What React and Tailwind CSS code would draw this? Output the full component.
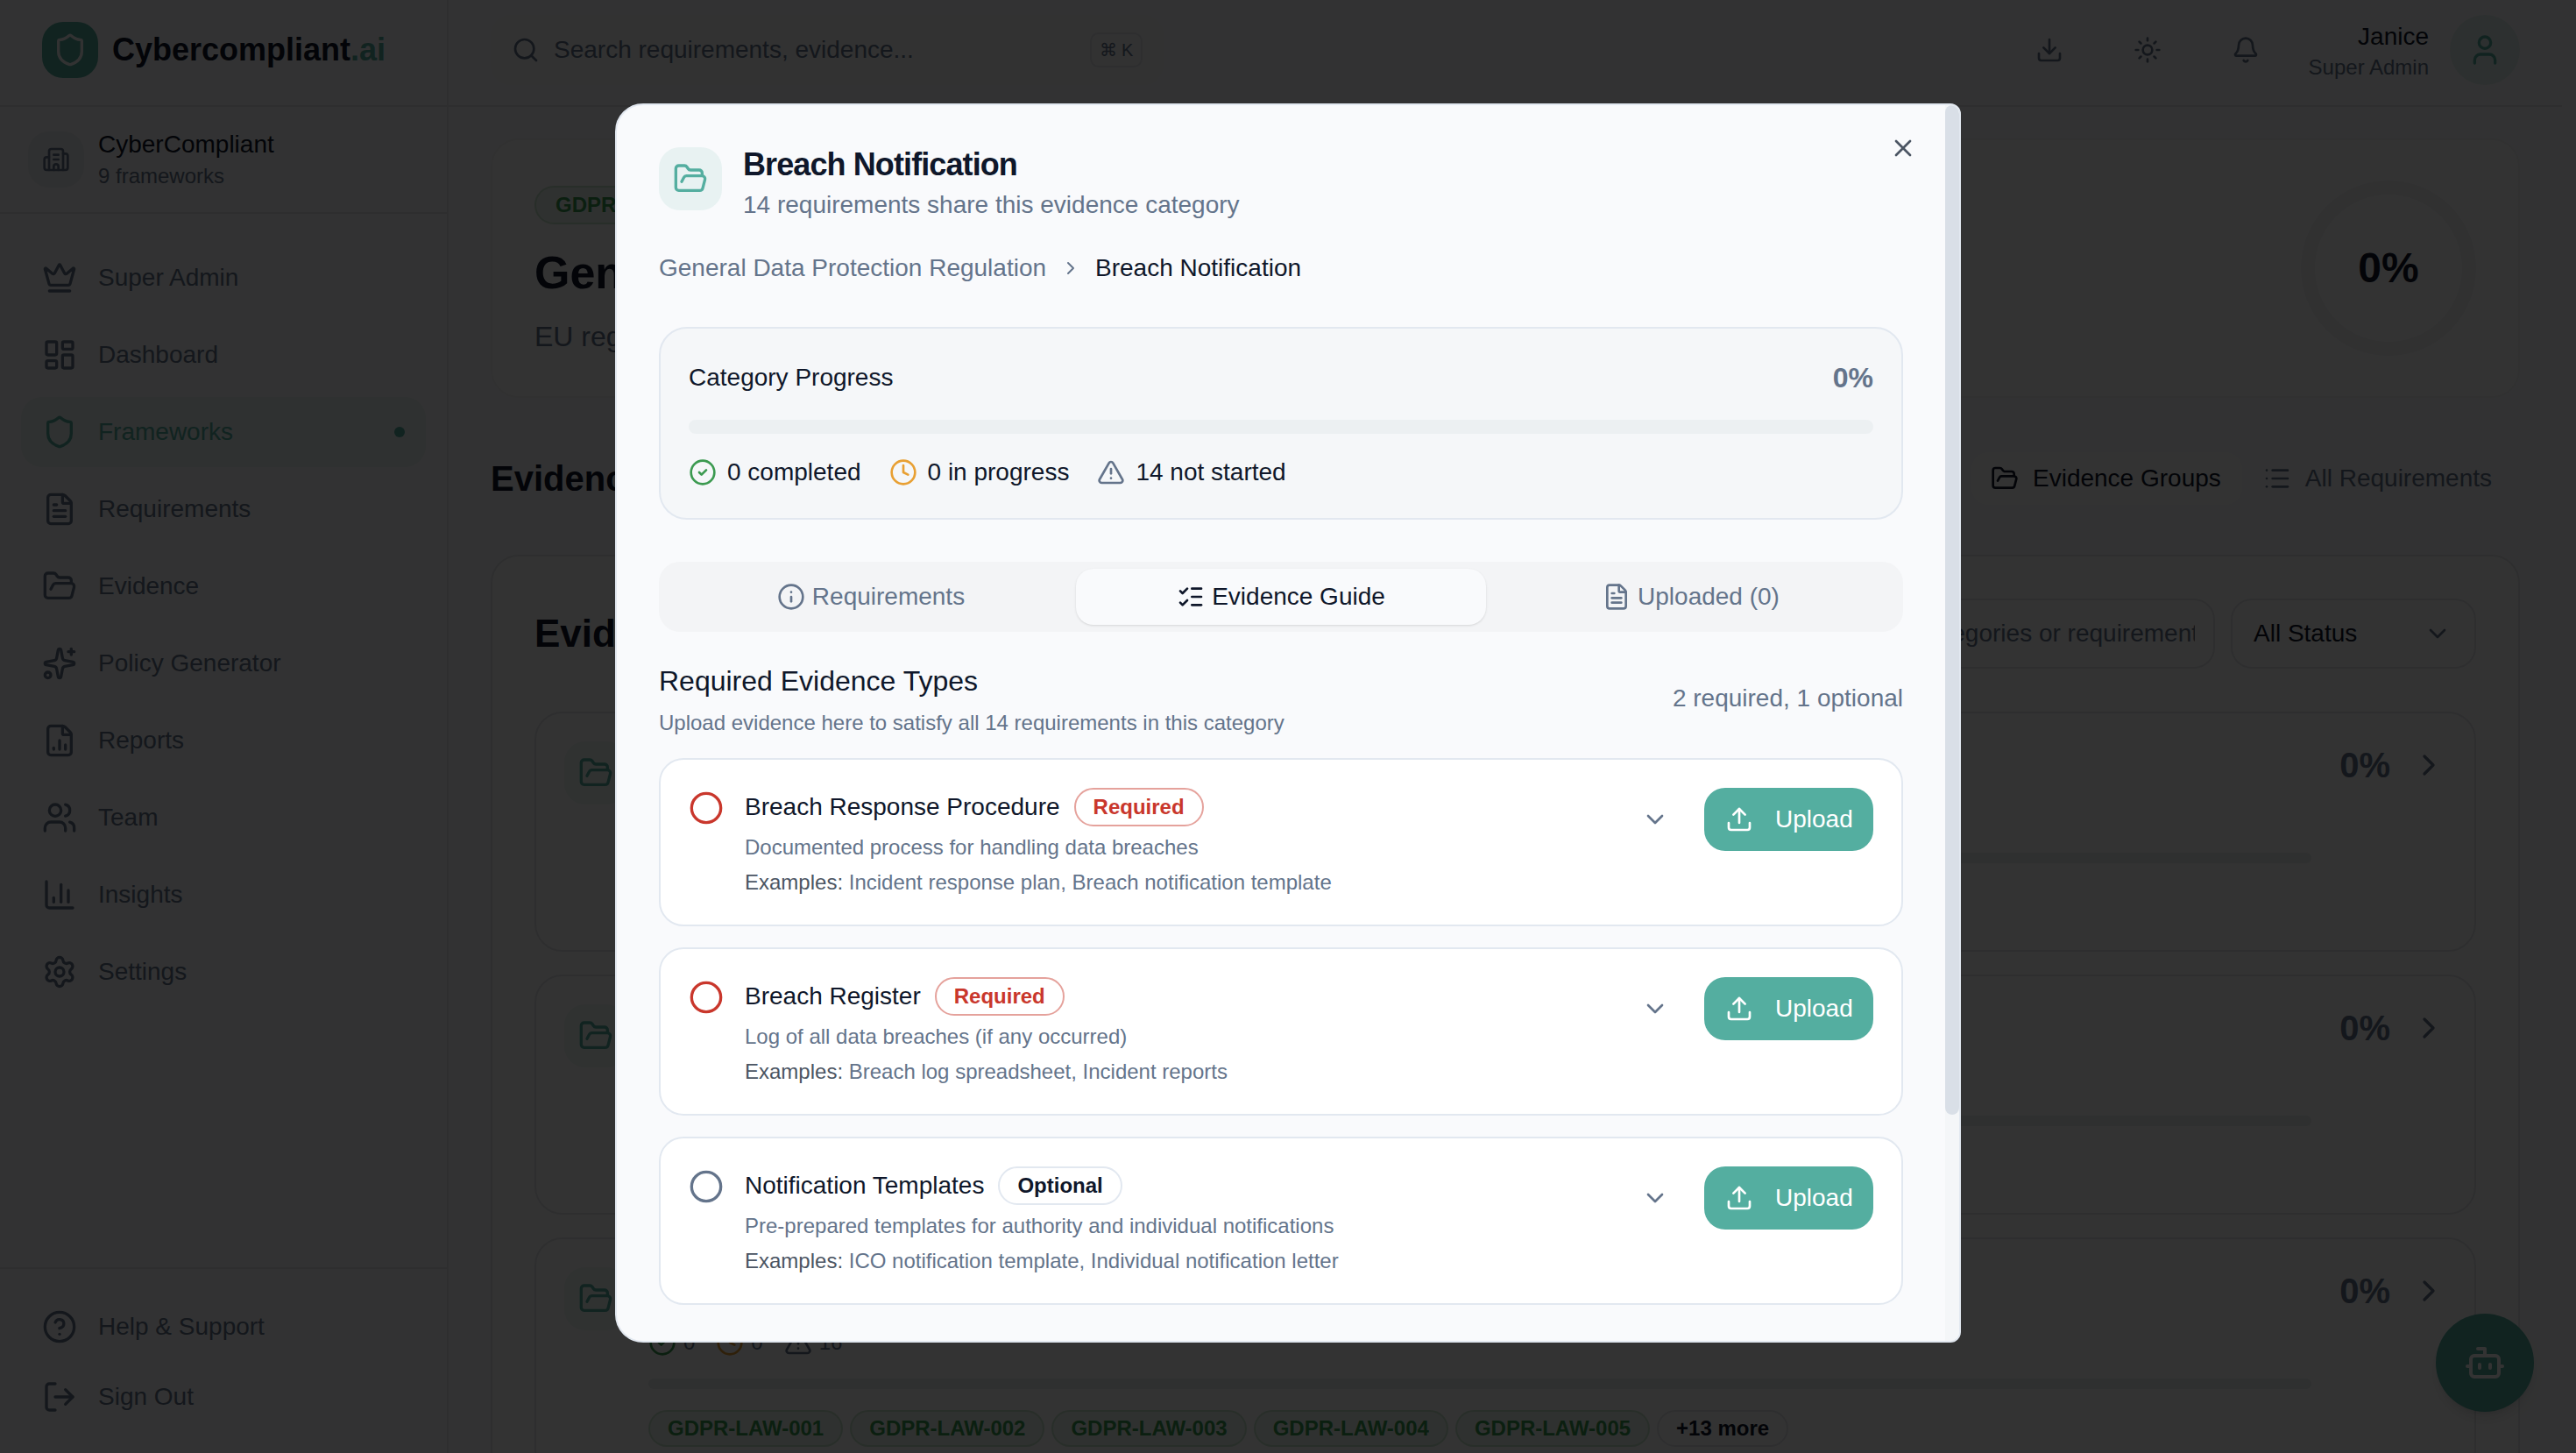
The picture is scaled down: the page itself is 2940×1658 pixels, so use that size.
import React from "react";
import {
  Shield, Building2, Crown, LayoutDashboard, FileText, FolderOpen, Sparkles, FileChartColumn, Users, ChartColumn, Settings,
  CircleHelp, LogOut, Search, Download, Sun, Bell, User, List, ChevronDown, ChevronRight, Bot, X, CircleCheck, Clock,
  TriangleAlert, Info, ListChecks, Upload, Circle,
} from "lucide-react";

const nav = [
  [Crown, "Super Admin"],
  [LayoutDashboard, "Dashboard"],
  [Shield, "Frameworks", true],
  [FileText, "Requirements"],
  [FolderOpen, "Evidence"],
  [Sparkles, "Policy Generator"],
  [FileChartColumn, "Reports"],
  [Users, "Team"],
  [ChartColumn, "Insights"],
  [Settings, "Settings"],
];

const tags = ["GDPR-LAW-001", "GDPR-LAW-002", "GDPR-LAW-003", "GDPR-LAW-004", "GDPR-LAW-005"];

function Sidebar() {
  return (
    <aside className="w-[512px] h-full shrink-0 flex flex-col border-r-2 border-[#e5e7eb] bg-[#fafbfc]">
      <div className="h-[122px] shrink-0 border-b-2 border-[#e5e7eb] flex items-center gap-4 pl-[48px] pb-[6px]">
        <div className="w-16 h-16 rounded-[24px] bg-[#54aea0] flex items-center justify-center text-[#f9fafb]">
          <Shield size={40} />
        </div>
        <div className="text-[36px] leading-[48px] font-bold text-[#0f172a]">
          Cybercompliant<span className="text-[#54aea0]">.ai</span>
        </div>
      </div>
      <div className="h-[122px] shrink-0 border-b-2 border-[#e5e7eb] flex items-center gap-4 pl-[32px]">
        <div className="w-16 h-16 rounded-[24px] bg-[#eceef2] flex items-center justify-center text-[#64748b]">
          <Building2 size={32} />
        </div>
        <div>
          <div className="text-[28px] leading-[36px] text-[#0f172a]">CyberCompliant</div>
          <div className="mt-[2px] text-[24px] leading-[32px] text-[#64748b]">9 frameworks</div>
        </div>
      </div>
      <nav className="flex-1 pt-[33px] px-6 flex flex-col gap-2">
        {nav.map(([I, label, active]) => (
          <div
            key={label}
            className={
              active
                ? "h-20 rounded-[24px] bg-[#54aea0]/10 text-[#54aea0] flex items-center gap-6 pl-6 pr-6"
                : "h-20 rounded-[24px] text-[#64748b] flex items-center gap-6 pl-6 pr-6"
            }
          >
            <I size={40} />
            <span className="text-[28px] flex-1">{label}</span>
            {active && <span className="w-3 h-3 rounded-full bg-[#54aea0]" />}
          </div>
        ))}
      </nav>
      <div className="border-t-2 border-[#e5e7eb] px-6 pt-[26px] pb-6">
        {[[CircleHelp, "Help & Support"], [LogOut, "Sign Out"]].map(([I, label]) => (
          <div key={label} className="h-20 flex items-center gap-6 pl-6 text-[#64748b]">
            <I size={40} />
            <span className="text-[28px]">{label}</span>
          </div>
        ))}
      </div>
    </aside>
  );
}

function Topbar() {
  return (
    <header className="h-[122px] shrink-0 border-b-2 border-[#e5e7eb] flex items-center px-12 pb-[6px]">
      <div className="w-[768px] h-20 rounded-[24px] bg-[#f3f4f6]/40 flex items-center pl-6 pr-6 gap-4 text-[#64748b]">
        <Search size={32} />
        <span className="text-[28px] flex-1">Search requirements, evidence...</span>
        <span className="w-[60px] h-10 rounded-[10px] border-2 border-[#e5e7eb] flex items-center justify-center text-[20px]">⌘ K</span>
      </div>
      <div className="flex-1" />
      <div className="flex items-center gap-8 text-[#64748b]">
        {[Download, Sun, Bell].map((I, i) => (
          <div key={i} className="w-20 h-20 flex items-center justify-center"><I size={32} /></div>
        ))}
      </div>
      <div className="ml-[32px] pt-[2px] text-right">
        <div className="text-[28px] leading-[36px] text-[#0f172a]">Janice</div>
        <div className="mt-[1px] text-[24px] leading-[32px] text-[#64748b]">Super Admin</div>
      </div>
      <div className="ml-6 w-20 h-20 rounded-full bg-[#54aea0]/15 flex items-center justify-center text-[#54aea0]">
        <User size={40} />
      </div>
    </header>
  );
}

function GroupCard({ title }) {
  return (
    <div className="h-[274px] shrink-0 rounded-[32px] border-2 border-[#e5e7eb] bg-white p-8 flex">
      <div className="w-[72px] h-[72px] rounded-[24px] bg-[#54aea0]/10 flex items-center justify-center text-[#54aea0] shrink-0">
        <FolderOpen size={40} />
      </div>
      <div className="ml-6 w-[1898px] shrink-0">
        <div className="h-12 text-[36px] leading-[48px] font-bold text-[#0f172a]">{title}</div>
        <div className="mt-[22px] h-8 flex items-center gap-6 text-[24px] text-[#64748b]">
          <span className="flex items-center gap-2"><CircleCheck size={32} className="text-[#3b9a50]" />0</span>
          <span className="flex items-center gap-2"><Clock size={32} className="text-[#e8a033]" />0</span>
          <span className="flex items-center gap-2"><TriangleAlert size={32} />16</span>
        </div>
        <div className="mt-[25px] h-3 rounded-full bg-[#e9edf0]" />
        <div className="mt-6 flex gap-2">
          {tags.map((t) => (
            <span key={t} className="h-[42px] px-[20px] rounded-full border-2 border-[#3b9a50]/20 bg-[#3b9a50]/10 text-[#3b9a50] text-[24px] leading-[38px] font-bold whitespace-nowrap">{t}</span>
          ))}
          <span className="h-[42px] px-[20px] rounded-full border-2 border-[#e5e7eb] text-[#0f172a] text-[24px] leading-[38px] font-bold whitespace-nowrap">+13 more</span>
        </div>
      </div>
      <div className="ml-auto flex items-start gap-6 pt-[3px] text-[#64748b]">
        <span className="text-[40px] leading-[48px] font-bold">0%</span>
        <ChevronRight size={40} className="mt-1" />
      </div>
    </div>
  );
}

function Main() {
  return (
    <main className="w-[2412px] shrink-0 h-full flex flex-col overflow-hidden">
      <Topbar />
      <div className="px-12 pt-[36px] flex flex-col">
        <section className="h-[296px] rounded-[32px] bg-white border-2 border-[#f3f4f6] pl-12 pr-12 flex items-center justify-between">
          <div className="mt-[5px]">
            <span className="inline-block h-[44px] px-[22px] rounded-full border-2 border-[#3b9a50]/20 bg-[#3b9a50]/10 text-[#3b9a50] text-[24px] leading-[40px] font-bold">GDPR</span>
            <h1 className="mt-[23px] text-[52px] leading-[64px] font-bold text-[#0f172a]">General Data Protection Regulation</h1>
            <p className="mt-[19px] text-[32px] leading-[44px] text-[#64748b]">EU regulation on data protection and privacy</p>
          </div>
          <div className="relative w-[200px] h-[200px] flex items-center justify-center">
            <svg viewBox="0 0 200 200" className="absolute inset-0 w-[200px] h-[200px]">
              <circle cx="100" cy="100" r="92" fill="none" stroke="#f3f4f6" strokeWidth="16" />
            </svg>
            <span className="relative text-[48px] font-bold text-[#0f172a]">0%</span>
          </div>
        </section>
        <div className="mt-[62px] h-[60px] flex items-center justify-between">
          <h2 className="text-[40px] font-bold text-[#0f172a]">Evidence Management</h2>
          <div className="h-[60px] flex items-center gap-[24px] pr-[32px] text-[28px]">
            <span className="h-[60px] pl-[22px] pr-[24px] rounded-[20px] bg-white flex items-center gap-[16px] text-[#0f172a]">
              <FolderOpen size={32} />Evidence Groups
            </span>
            <span className="flex items-center gap-[16px] text-[#64748b]"><List size={32} />All Requirements</span>
          </div>
        </div>
        <section className="mt-[57px] rounded-[32px] border-2 border-[#e5e7eb] bg-white p-12 pb-0 h-[1200px]">
          <div className="h-20 flex items-center">
            <h2 className="flex-1 text-[44px] font-bold text-[#0f172a]">Evidence Categories</h2>
            <div className="w-[640px] h-20 rounded-[24px] border-2 border-[#e5e7eb] flex items-center pl-[40px] pr-[21px] text-[28px] text-[#64748b]">
              <div className="flex-1 overflow-hidden whitespace-nowrap flex justify-end">
                <span className="shrink-0 -mr-1">Search categories or requirement</span>
              </div>
            </div>
            <div className="ml-[18px] w-[280px] h-20 rounded-[24px] border-2 border-[#e5e7eb] flex items-center justify-between pl-[24px] pr-[26px] text-[28px] text-[#0f172a]">
              All Status <ChevronDown size={32} className="text-[#64748b]" />
            </div>
          </div>
          <div className="mt-[49px] flex flex-col gap-[26px]">
            <GroupCard title="Lawful Basis" />
            <GroupCard title="Data Subject Rights" />
            <GroupCard title="Breach Notification" />
          </div>
        </section>
      </div>
    </main>
  );
}

function EvidenceCard({ name, badge, required, desc, examples }) {
  return (
    <div className="h-[192px] rounded-[28px] border-2 border-[#e2e8f0] bg-white p-8 flex items-start">
      <Circle size={40} className={required ? "mt-[3px] shrink-0 text-[#c9372c]" : "mt-[3px] shrink-0 text-[#64748b]"} />
      <div className="ml-6 flex-1">
        <div className="h-11 flex items-center gap-4">
          <span className="text-[28px] text-[#0f172a]">{name}</span>
          <span
            className={
              required
                ? "h-11 px-5 rounded-full border-2 border-[#e5a29c] text-[#c9372c] text-[24px] leading-[40px] font-bold"
                : "h-11 px-5 rounded-full border-2 border-[#e2e8f0] text-[#0f172a] text-[24px] leading-[40px] font-bold"
            }
          >
            {badge}
          </span>
        </div>
        <div className="mt-[8px] text-[24px] leading-[32px] text-[#64748b]">{desc}</div>
        <div className="mt-2 text-[24px] leading-[32px] text-[#64748b]">
          <span className="text-[#4b5563]">Examples:</span> {examples}
        </div>
      </div>
      <div className="flex items-center gap-6">
        <div className="w-16 h-[72px] flex items-center justify-center text-[#64748b]"><ChevronDown size={32} /></div>
        <button className="w-[193px] h-[72px] rounded-[24px] bg-[#54aea0] text-white flex items-center pl-6 gap-[25px] text-[28px]">
          <Upload size={32} />Upload
        </button>
      </div>
    </div>
  );
}

function Modal() {
  return (
    <div className="absolute left-[702px] top-[118px] w-[1536px] h-[1414px] rounded-l-[32px] rounded-r-[12px] border-2 border-[#e2e8f0] bg-[#f9fafc] overflow-hidden flex">
      <div className="relative w-[1516px] shrink-0 h-full overflow-hidden px-12 pt-12">
        <X size={32} className="absolute right-[32px] top-[33px] text-[#4b5563]" />
        <div className="flex gap-6">
          <div className="w-[72px] h-[72px] rounded-[24px] bg-[#54aea0]/10 flex items-center justify-center text-[#54aea0]">
            <FolderOpen size={40} />
          </div>
          <div>
            <div className="text-[36px] leading-[40px] font-bold tracking-tight text-[#0f172a]">Breach Notification</div>
            <div className="mt-[6px] text-[28px] leading-[40px] text-[#64748b]">14 requirements share this evidence category</div>
          </div>
        </div>
        <div className="mt-[32px] h-10 flex items-center gap-4 text-[28px]">
          <span className="text-[#64748b]">General Data Protection Regulation</span>
          <ChevronRight size={24} className="text-[#64748b]" />
          <span className="text-[#0f172a]">Breach Notification</span>
        </div>
        <div className="mt-[47px] h-[220px] rounded-[32px] border-2 border-[#e2e8f0] bg-[#f5f7f9] px-8 pt-8">
          <div className="flex items-center justify-between h-12">
            <span className="text-[28px] text-[#0f172a]">Category Progress</span>
            <span className="text-[32px] font-bold text-[#64748b]">0%</span>
          </div>
          <div className="mt-6 h-4 rounded-full bg-[#ecf0f2]" />
          <div className="mt-6 h-10 flex items-center gap-8 text-[28px] text-[#0f172a]">
            <span className="flex items-center gap-3"><CircleCheck size={32} className="text-[#3b9a50]" />0 completed</span>
            <span className="flex items-center gap-3"><Clock size={32} className="text-[#e8a033]" />0 in progress</span>
            <span className="flex items-center gap-3"><TriangleAlert size={32} className="text-[#64748b]" />14 not started</span>
          </div>
        </div>
        <div className="mt-[48px] h-20 rounded-[24px] bg-[#f3f4f6] p-2 grid grid-cols-3 text-[28px]">
          <div className="flex items-center justify-center gap-2 text-[#64748b]"><Info size={32} />Requirements</div>
          <div className="flex items-center justify-center gap-2 text-[#0f172a] bg-[#f9fafc] rounded-[20px] shadow-sm"><ListChecks size={32} />Evidence Guide</div>
          <div className="flex items-center justify-center gap-2 text-[#64748b]"><FileText size={32} />Uploaded (0)</div>
        </div>
        <div className="mt-8 flex items-center justify-between">
          <div>
            <div className="text-[32px] leading-[48px] text-[#0f172a]">Required Evidence Types</div>
            <div className="mt-2 text-[24px] leading-[32px] text-[#64748b]">Upload evidence here to satisfy all 14 requirements in this category</div>
          </div>
          <div className="text-[28px] text-[#64748b]">2 required, 1 optional</div>
        </div>
        <div className="mt-6 flex flex-col gap-6">
          <EvidenceCard name="Breach Response Procedure" badge="Required" required desc="Documented process for handling data breaches" examples="Incident response plan, Breach notification template" />
          <EvidenceCard name="Breach Register" badge="Required" required desc="Log of all data breaches (if any occurred)" examples="Breach log spreadsheet, Incident reports" />
          <EvidenceCard name="Notification Templates" badge="Optional" desc="Pre-prepared templates for authority and individual notifications" examples="ICO notification template, Individual notification letter" />
        </div>
      </div>
      <div className="w-4 shrink-0 h-full bg-[#f4f6f8]">
        <div className="h-[1152px] rounded-full bg-[#d9dfe7]" />
      </div>
    </div>
  );
}

export default function App() {
  return (
    <div className="relative w-[2940px] h-[1658px] overflow-hidden flex bg-[#fafbfc] font-['Liberation_Sans',Arial,sans-serif]">
      <Sidebar />
      <Main />
      <div className="absolute left-[2780px] top-[1499px] w-[112px] h-[112px] rounded-full bg-[#54aea0] shadow-lg flex items-center justify-center text-white">
        <Bot size={48} />
      </div>
      <div className="absolute inset-0 bg-black/80" />
      <Modal />
    </div>
  );
}
